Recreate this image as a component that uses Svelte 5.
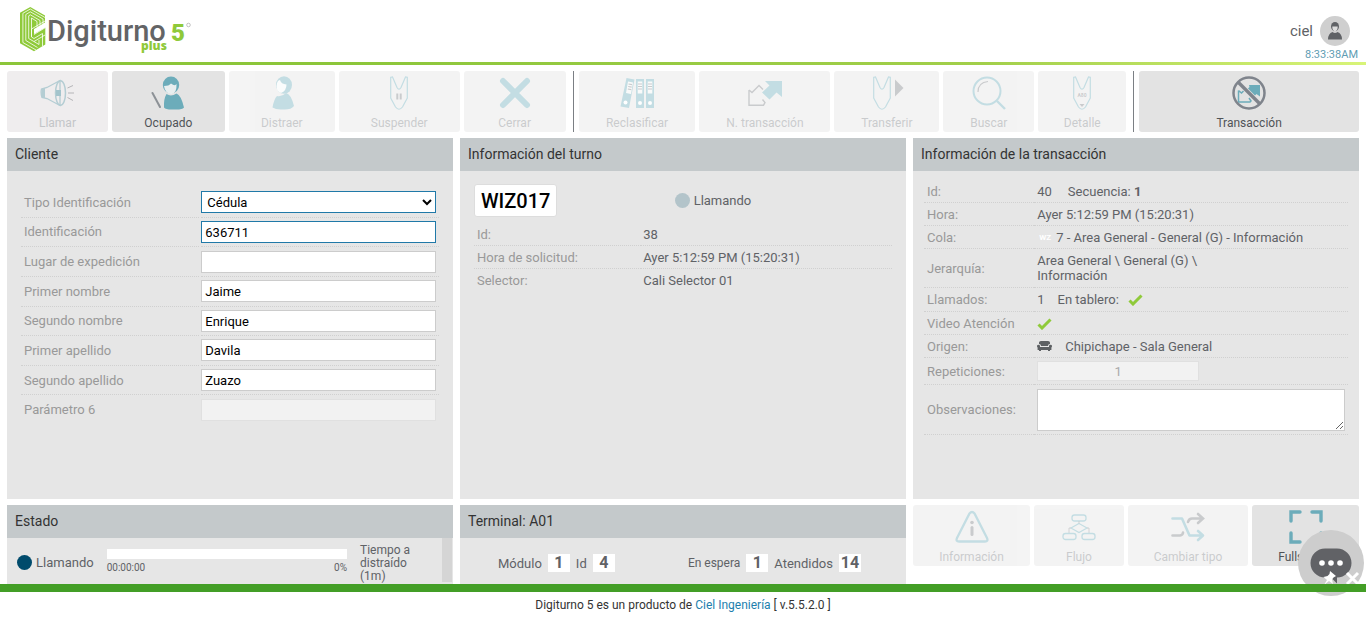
<script>
  const groups = [
    { id: 'main', items: [
      { icon: 'horn', label: 'Llamar', state: 'soft', w: 101 },
      { icon: 'busy', label: 'Ocupado', state: 'on', w: 113 },
      { icon: 'away', label: 'Distraer', state: 'off', w: 106 },
      { icon: 'pause', label: 'Suspender', state: 'off', w: 121 },
      { icon: 'cross', label: 'Cerrar', state: 'off', w: 102 }
    ] },
    { id: 'turn', items: [
      { icon: 'folders', label: 'Reclasificar', state: 'off', w: 117 },
      { icon: 'swap', label: 'N. transacción', state: 'off', w: 131 },
      { icon: 'transfer', label: 'Transferir', state: 'off', w: 105 },
      { icon: 'search', label: 'Buscar', state: 'off', w: 91 },
      { icon: 'detail', label: 'Detalle', state: 'off', w: 88 }
    ] },
    { id: 'trans', items: [
      { icon: 'noswap', label: 'Transacción', state: 'on', w: 220 }
    ] }
  ];
  const tools = [
    { icon: 'info', label: 'Información', state: 'off', w: 117 },
    { icon: 'flow', label: 'Flujo', state: 'off', w: 90 },
    { icon: 'shuffle', label: 'Cambiar tipo', state: 'off', w: 120 },
    { icon: 'full', label: 'Fullscreen', state: 'on', w: 107 }
  ];
  const fields = [
    { id: 'ident', label: 'Identificación', value: '636711', focus: true },
    { id: 'lugar', label: 'Lugar de expedición', value: '' },
    { id: 'nombre1', label: 'Primer nombre', value: 'Jaime' },
    { id: 'nombre2', label: 'Segundo nombre', value: 'Enrique' },
    { id: 'apellido1', label: 'Primer apellido', value: 'Davila' },
    { id: 'apellido2', label: 'Segundo apellido', value: 'Zuazo' },
    { id: 'param6', label: 'Parámetro 6', value: '', disabled: true }
  ];
  // Button widths plus the 4px gaps between them
  const share = (items) => items.reduce((sum, item) => sum + item.w, 4 * (items.length - 1));
</script>

{#snippet glyph(name)}
  <svg class="glyph" viewBox="0 0 34 34" fill="none" aria-hidden="true">
    {#if name === 'horn'}
      <path d="M1.500 13Q.5 17 2 21.500L7 22.500 20 29.500V4.500L7 11.500Z" stroke="#b4cdd3" stroke-width="1.300" />
      <path d="M2 12.500Q.5 17 2 21.500L5 22V12Z" fill="#b4cdd3" />
      <ellipse cx="20.500" cy="17" rx="5" ry="12.300" stroke="#b4cdd3" stroke-width="1.500" />
      <path d="M16 14h5v6h-5z" fill="#a3c4cc" />
      <path d="M27.500 12 33 9.500M28 17h6M27.500 21.500 33 24.500" stroke="#b5b5b8" stroke-width="1" />
    {:else if name === 'busy'}
      <path d="M1.500 17 9 31" stroke="#8c9196" stroke-width="2" stroke-linecap="round" />
      <ellipse cx="20" cy="9" rx="8.200" ry="8.500" fill="#6cacba" />
      <path d="M13 10Q18 10 20 7.500 24 10.500 25.500 8 26 17 20.500 18.300 14 17.500 13 10Z" fill="#e8eeef" />
      <path d="M15.500 18Q20 21 25.500 17.500 30 19 33 31.500 31 34 23 33.500 15 34 13 31.500 12.500 23 15.500 18Z" fill="#6cacba" />
    {:else if name === 'away'}
      <ellipse cx="19" cy="9" rx="8" ry="8.800" fill="#6cacba" />
      <path d="M11.500 10Q12 4 15 4 16 8 21.500 8.500 21.500 15 16 17 11.500 15.500 11.500 10Z" fill="#f4f8f8" />
      <path d="M12 20Q17 21 21 17 26 18 29 30 26 34 18 33.500 11 34 7.500 31.500 9 23 12 20Z" fill="#6cacba" />
    {:else if name === 'pause' || name === 'transfer' || name === 'detail'}
      <g transform={name === 'transfer' ? 'translate(-5 0)' : ''}>
        <path d="M8.700 1.300 10.500 1 15 11.500Q17 15 19 11.500L23.500 1 25.300 1.300V22L20.500 31Q17 35.500 13.500 31L8.700 22Z" stroke="#6cacba" stroke-width="1.200" />
      </g>
      {#if name === 'pause'}
        <path d="M15.300 17.500v6M18.700 17.500v6" stroke="#7b7f84" stroke-width="2" />
      {:else if name === 'transfer'}
        <path d="M25 3.500v17l8.500-8.500z" fill="#7b7f84" />
      {:else}
        <text x="17" y="20.500" class="tiny" text-anchor="middle">A80</text>
        <path d="M14.500 28h5l-2.500 3z" fill="#7b7f84" />
      {/if}
    {:else if name === 'cross'}
      <path d="M5 5 29 29M29 5 5 29" stroke="#6cacba" stroke-width="6" stroke-linecap="round" />
    {:else if name === 'folders'}
      <path d="M6.500 2 14.500 3.500 9 32 .5 30.500ZM16 3h8v29h-8zM26 3h8v29h-8z" fill="#6cacba" />
      <path d="M8 5.500 13 6.500 11 18 6 17ZM17.700 5.500h4.600v12h-4.600zM27.700 5.500h4.600v12h-4.600z" fill="#f2f5f5" />
      <path d="m8.500 8 3.500.6M8.200 10.500l3.500.6M7.800 13l3.500.6M18 8h4M18 10.500h4M18 13h4M28 8h4M28 10.500h4M28 13h4" stroke="#7b7f84" stroke-width="1.200" />
      <circle cx="5.500" cy="26.500" r="2" fill="#fff" /><circle cx="20" cy="27" r="2" fill="#fff" /><circle cx="30" cy="27" r="2" fill="#fff" />
    {:else if name === 'swap'}
      <path d="M1 14 4 16.500 11 9.500 15 13.500M14.500 23.500l2.500 3-1.500 2.700H1V14" stroke="#7b7f84" stroke-width="1.400" />
      <path d="M17 5h17v16l-5.500-4.500-7 7L14 16.500l7.500-7z" fill="#6cacba" />
    {:else if name === 'search'}
      <circle cx="15" cy="15" r="13.500" stroke="#6cacba" stroke-width="2" />
      <path d="M25 25 33 33" stroke="#6cacba" stroke-width="2.400" />
      <path d="M6 16Q6 6.500 16 5.500" stroke="#7b7f84" stroke-width="1.200" />
    {:else if name === 'noswap'}
      <path d="M6.500 14.500 9.500 17 13 13.500M17 22l2 3-1 1H6.500V14.500" stroke="#6cacba" stroke-width="1.500" />
      <path d="M17 9h11v11.500L24.500 18l-4 4-7-7 4-4z" fill="#6cacba" />
      <path d="M6 6 28 28" stroke="#e3e3e3" stroke-width="5" />
      <path d="M6 6 28 28" stroke="#7f848c" stroke-width="3.400" />
      <circle cx="17" cy="17" r="15.500" stroke="#7f848c" stroke-width="2.500" />
    {:else if name === 'info'}
      <path d="M14.500 3.500Q17 .5 19.500 3.500L32 28Q33.500 31.500 30 31.500H4Q.5 31.500 2 28Z" stroke="#6cacba" stroke-width="2.300" />
      <circle cx="17" cy="12.500" r="1.800" fill="#7b7f84" />
      <path d="M17 17.500v7" stroke="#7b7f84" stroke-width="3" stroke-linecap="round" />
    {:else if name === 'flow'}
      <rect x="10" y="5" width="14" height="6" rx="2.500" stroke="#6cacba" stroke-width="1.300" />
      <path d="M17 13.500 25 18l-8 4.500L9 18Z" stroke="#6cacba" stroke-width="1.200" />
      <path d="M17 11v2.500M9 18H7v5M25 18h2v5" stroke="#7b7f84" stroke-width=".8" />
      <rect x="1" y="23.500" width="13" height="6" rx="2.500" stroke="#6cacba" stroke-width="1.300" />
      <rect x="20" y="23.500" width="13" height="6" rx="2.500" stroke="#6cacba" stroke-width="1.300" />
    {:else if name === 'shuffle'}
      <path d="M1.500 25.500H9Q12 25 12 22.500M17 12Q18 8.500 21 8.500H31M27 4l5 4.500-5 4.500" stroke="#7b7f84" stroke-width="2.600" stroke-linecap="round" />
      <path d="M1.500 8.500H11L18.500 25.500H31M27 21l5 4.500-5 4.500" stroke="#6cacba" stroke-width="2.600" stroke-linecap="round" stroke-linejoin="round" />
    {:else if name === 'full'}
      <path d="M2 11V2H11M23 2H32V11M2 23V32H11M23 32H32V23" stroke="#6cacba" stroke-width="3.400" stroke-linecap="round" />
    {/if}
  </svg>
{/snippet}

{#snippet action(item)}
  <button type="button" class="action {item.state}" disabled={item.state !== 'on'} style="flex-grow: {item.w}">
    {@render glyph(item.icon)}
    <span>{item.label}</span>
  </button>
{/snippet}

{#snippet check()}
  <svg class="check" viewBox="0 0 15 12" aria-label="Sí"><path d="M1.500 6.500 5 10 13.500 1.500" fill="none" stroke="#8fca3a" stroke-width="3" /></svg>
{/snippet}

<div class="page">
  <header>
    <svg class="logo" viewBox="0 0 180 50" role="img" aria-label="Digiturno 5 plus">
      <path d="M10.300 0 25 8.500V15.500L14 22V27L25.300 20.500V37.500L14 44.300 0 36.300V5.700Z" fill="#8fca3a" />
      <g fill="none" stroke="#fff" stroke-width=".8">
        <path d="M2.900 6.300V35.500L16 43M2.900 6.300 10.300 2 25 10.500" />
        <path d="M5.800 7.500V33.500L17.500 40.500M5.800 7.500 10.300 4.800 23 12V17" />
        <path d="M8.700 8.800V31.500L19 37.500V33M8.700 8.800 10.300 7.800 20 13.500V18.500" />
        <path d="M11.500 11V30L14 31.500 22.500 26.500V39M14 34.500 25 28M11.500 11 17 14.500V20" />
        <path d="M11.500 29.500V22L25 14M14 27.500 25.500 20.500" />
      </g>
      <text x="27" y="34" class="brand">Digiturno</text>
      <text x="151" y="34" class="five">5</text>
      <text x="121" y="43" class="plus">plus</text>
      <circle cx="168.500" cy="18" r="1.800" fill="none" stroke="#aaa" stroke-width=".7" />
    </svg>
    <div class="account">
      <div class="user">
        <span>ciel</span>
        <svg viewBox="0 0 30 30" aria-hidden="true">
          <circle cx="15" cy="15" r="15" fill="#cfcfcf" />
          <ellipse cx="15" cy="10.500" rx="4" ry="4.600" fill="#606266" />
          <path d="M12.300 10.500h5.400q.2 4-2.700 4.800-2.900-.8-2.700-4.800z" fill="#ddd" />
          <path d="M8 23.500q0-6 4.500-7.500 2.500 2 5 0 4.500 1.500 4.500 7.500z" fill="#606266" />
        </svg>
      </div>
      <time>8:33:38AM</time>
    </div>
  </header>

  <nav class="bar" aria-label="Acciones">
    {#each groups as group (group.id)}
      <div class="group" style="flex-grow: {share(group.items)}">
        {#each group.items as item (item.label)}{@render action(item)}{/each}
      </div>
    {/each}
  </nav>

  <main>
    <section class="panel">
      <h2>Cliente</h2>
      <form class="client">
        <div class="row">
          <label for="tipo">Tipo Identificación</label>
          <div class="cell"><select id="tipo" class="focus"><option>Cédula</option></select></div>
        </div>
        {#each fields as f (f.id)}
          <div class="row">
            <label for={f.id}>{f.label}</label>
            <div class="cell"><input id={f.id} type="text" value={f.value} disabled={f.disabled} class:focus={f.focus} /></div>
          </div>
        {/each}
      </form>
    </section>

    <section class="panel">
      <h2>Información del turno</h2>
      <div class="turn">
        <div class="ticket">
          <strong>WIZ017</strong>
          <span class="status"><i class="dot"></i>Llamando</span>
        </div>
        <table>
          <tbody>
            <tr><th scope="row">Id:</th><td>38</td></tr>
            <tr><th scope="row">Hora de solicitud:</th><td>Ayer 5:12:59 PM (15:20:31)</td></tr>
            <tr><th scope="row">Selector:</th><td>Cali Selector 01</td></tr>
          </tbody>
        </table>
      </div>
    </section>

    <section class="panel">
      <h2>Información de la transacción</h2>
      <table class="trans">
        <tbody>
          <tr><th scope="row">Id:</th><td><div class="inline"><span>40</span><span>Secuencia: <b>1</b></span></div></td></tr>
          <tr><th scope="row">Hora:</th><td>Ayer 5:12:59 PM (15:20:31)</td></tr>
          <tr><th scope="row">Cola:</th><td><span class="tag">WZ</span>7 - Area General - General (G) - Información</td></tr>
          <tr class="tall"><th scope="row">Jerarquía:</th><td>Area General \ General (G) \<br />Información</td></tr>
          <tr class="calls"><th scope="row">Llamados:</th><td><div class="inline"><span>1</span><span class="board">En tablero: {@render check()}</span></div></td></tr>
          <tr><th scope="row">Video Atención</th><td>{@render check()}</td></tr>
          <tr><th scope="row">Origen:</th><td><div class="origin">
            <svg viewBox="0 0 15 10" aria-hidden="true"><path d="M2 3V1.500Q2 0 4 0h7q2 0 2 1.500V3q-2 0-2 2H4Q4 3 2 3zM0 5q0-1.300 1.500-1.300T3 5v1h9V5q0-1.300 1.500-1.300T15 5q0 1-.6 1.500V9H13v1h-2V9H4v1H2V9H.6V6.500Q0 6 0 5z" fill="#5d6063" /></svg>
            Chipichape - Sala General</div></td></tr>
          <tr class="reps"><th scope="row"><label for="reps">Repeticiones:</label></th><td><input id="reps" type="text" value="1" disabled /></td></tr>
          <tr class="notes"><th scope="row"><label for="obs">Observaciones:</label></th><td><textarea id="obs"></textarea></td></tr>
        </tbody>
      </table>
    </section>
  </main>

  <div class="lower">
    <section class="panel">
      <h2>Estado</h2>
      <div class="state">
        <span class="status now"><i class="dot"></i>Llamando</span>
        <div class="meter">
          <div class="track"></div>
          <div class="figures"><span>00:00:00</span><span>0%</span></div>
        </div>
        <p>Tiempo a distraído (1m)</p>
        <div class="thumb"></div>
      </div>
    </section>
    <section class="panel">
      <h2>Terminal: A01</h2>
      <div class="terminal">
        <div><span>Módulo</span><b>1</b><span>Id</span><b>4</b></div>
        <div><span class="small">En espera</span><b>1</b><span>Atendidos</span><b>14</b></div>
      </div>
    </section>
    <div class="group tools">
      {#each tools as item (item.label)}{@render action(item)}{/each}
    </div>
  </div>

  <footer>
    <p>Digiturno 5 es un producto de <a href="#ciel">Ciel Ingeniería</a> [ v.5.5.2.0 ]</p>
  </footer>

  <button type="button" class="chat" aria-label="Chat">
    <svg viewBox="0 0 66 66" aria-hidden="true">
      <circle cx="33" cy="33" r="33" fill="#cdcdcd" />
      <path d="M27 18.500h12a14.500 14.500 0 0 1 0 29v6l-6-6h-6a14.500 14.500 0 0 1 0-29z" fill="#616266" />
      <circle cx="24" cy="33" r="2.800" fill="#fff" /><circle cx="33" cy="33" r="2.800" fill="#fff" /><circle cx="42" cy="33" r="2.800" fill="#fff" />
      <path d="m32 41 6 5-2.500 1.500-1.500 2 1 4.500-4-3-5 4 3-5-3.500-3 4-1 2-2z" fill="#fff" />
      <path d="m49 43 11 11m0-11-11 11" stroke="#fff" stroke-width="3" fill="none" />
    </svg>
  </button>
</div>

<style>
  :global(body) { margin: 0; background: #fff; }
  .page {
    position: relative;
    display: flex;
    flex-direction: column;
    min-height: 100vh;
    overflow: hidden;
    font: 13px/15px Roboto, "Liberation Sans", sans-serif;
    color: #606266;
  }
  .page * { box-sizing: border-box; }
  button, input, select, textarea { font: inherit; margin: 0; }

  header { display: flex; justify-content: space-between; height: 65px; position: relative; }
  header::after {
    content: "";
    position: absolute;
    inset: auto 0 0;
    height: 3px;
    background: linear-gradient(90deg, #8cc63a 25%, #a2cf4a 72%, #d8f478);
  }
  .logo { width: 180px; height: 50px; margin: 7px 0 0 20px; }
  .brand { font-size: 29px; font-weight: 500; fill: #636466; }
  .five { font: 900 24px Roboto, sans-serif; fill: #8fc93a; }
  .plus { font: 800 12px "Open Sans", Roboto, sans-serif; fill: #8fc93a; }
  .account { display: flex; flex-direction: column; align-items: flex-end; padding: 16px 8px 0 0; }
  .user { display: flex; align-items: center; gap: 7px; padding-right: 8px; font-size: 15px; }
  .user svg { width: 30px; height: 30px; }
  time { font-size: 11px; line-height: 18px; color: #5f9db3; }

  .bar { display: flex; padding: 6px 7px; }
  .group { display: flex; gap: 4px; flex: 1 1 0; min-width: 0; }
  .bar .group + .group { border-left: 1px solid #7b7f84; margin-left: 7px; padding-left: 5px; }
  .action {
    flex: 1 1 0;
    min-width: 0;
    display: flex;
    flex-direction: column;
    align-items: center;
    height: 61px;
    padding: 5px 0 0;
    border: 0;
    border-radius: 3px;
    background: #e3e3e3;
    color: #505357;
    font-size: 12px;
    line-height: 14px;
    white-space: nowrap;
  }
  .action span { margin-top: 6px; }
  .action.off { opacity: .4; color: #7b7f84; }
  .action.soft { background: #efedee; color: #c3c5c8; }
  .glyph { width: 34px; height: 34px; }
  .tiny { font-size: 5px; font-weight: 700; fill: #7b7f84; }

  main, .lower { display: grid; grid-template-columns: repeat(3, minmax(0, 1fr)); gap: 7px; padding: 0 7px; }
  main { flex: 1; }
  .lower { margin-top: 6px; min-height: 79px; }
  .panel { display: flex; flex-direction: column; background: #e6e6e6; }
  h2 {
    margin: 0;
    padding: 0 8px;
    background: #c4c9cb;
    color: #333;
    font-size: 14px;
    font-weight: 400;
    line-height: 33px;
  }

  .client { display: grid; grid-template-rows: repeat(8, 1fr); height: 237px; margin: 17px 14px 0; }
  .row { display: grid; grid-template-columns: 3fr 4fr; gap: 2px; }
  .row > * { border-bottom: 1px dotted #d0d0d0; }
  .row:last-child > * { border-color: transparent; }
  .row label { display: flex; align-items: center; padding-left: 3px; color: #999; }
  .cell { display: flex; align-items: center; padding-right: 3px; }
  .cell input, .cell select { width: 100%; height: 22px; border: 1px solid #ccc; background: #fff; color: #000; padding: 1px 3px 0; outline: 0; border-radius: 0; }
  .cell select { padding: 1px 1px 0; }
  .cell .focus { border-color: #2079a8; }
  .cell input:disabled { background: #f2f2f2; border-color: #e0e0e0; }

  .turn { padding: 13px 14px; }
  .ticket { display: grid; grid-template-columns: 12fr 13fr; align-items: center; }
  .ticket strong {
    justify-self: start;
    padding: 2px 6px 0;
    border: 1px solid #ddd;
    border-radius: 3px;
    background: #fff;
    color: #000;
    font-size: 20px;
    font-weight: 500;
    line-height: 29px;
  }
  .status { display: flex; align-items: center; gap: 4px; }
  .dot { width: 15px; height: 15px; border-radius: 50%; background: #b3c4ca; }

  table { width: 100%; border-spacing: 0; }
  .turn table { margin-top: 6px; }
  tr { height: 23px; }
  th, td { padding: 0 3px; text-align: left; font-weight: 400; border-bottom: 1px dotted #d0d0d0; }
  th { width: 40%; color: #999; }
  td { padding-left: 2px; }
  .turn tr:last-child > * { border: 0; }
  .trans { width: auto; margin: 9px 11px 0; }
  .trans th { width: 26%; }
  .trans td { padding-left: 3px; }
  .tall { height: 39px; }
  .calls { height: 24px; }
  .calls .inline { gap: 13px; }
  .reps { height: 27px; }
  .notes { height: 50px; }
  .inline { display: flex; gap: 16px; }
  .board { display: flex; gap: 9px; }
  .check { display: block; width: 15px; height: 12px; margin-top: 2px; }
  .origin { display: flex; align-items: center; gap: 13px; }
  .origin svg { width: 15px; height: 10px; }
  .tag { display: inline-block; width: 19px; padding-left: 2px; color: #fff; font-size: 8px; font-weight: 700; vertical-align: top; }
  #reps { display: block; width: 162px; height: 20px; border: 1px solid #e0e0e0; background: #f2f2f2; color: #aaa; text-align: center; }
  textarea { display: block; width: 100%; height: 42px; border: 1px solid #ccc; background: #fff; outline: 0; }

  .state { display: flex; flex: 1; align-items: flex-start; padding-left: 10px; }
  .now { margin-top: 17px; }
  .now .dot { background: #004b6c; }
  .meter { flex: 1; margin: 11px 13px 0; }
  .track { height: 10px; background: #fff; }
  .figures { display: flex; justify-content: space-between; font-size: 10px; line-height: 18px; }
  .state p { width: 72px; margin: 6px 10px 0 0; font-size: 12px; line-height: 13px; }
  .thumb { width: 10px; height: 44px; margin-right: 1px; background: #d5d5d5; }
  .terminal { display: flex; justify-content: space-between; padding: 16px 45px 0 38px; }
  .terminal div { display: flex; align-items: center; gap: 6px; }
  .terminal b { min-width: 22px; background: #fff; font-size: 16px; line-height: 18px; text-align: center; }
  .small { font-size: 12px; }

  footer { position: relative; padding-top: 8px; height: 33px; }
  footer::before { content: ""; position: absolute; inset: 0 0 auto; z-index: 2; height: 8px; background: #3f9c22; opacity: .98; }
  footer p { margin: 0; text-align: center; font-size: 12px; line-height: 26px; color: #333; }
  a { color: #1d7fae; text-decoration: none; }
  .chat { position: absolute; right: 2px; bottom: 21px; width: 66px; height: 66px; padding: 0; border: 0; border-radius: 50%; background: none; }
  .chat svg { display: block; }
</style>
